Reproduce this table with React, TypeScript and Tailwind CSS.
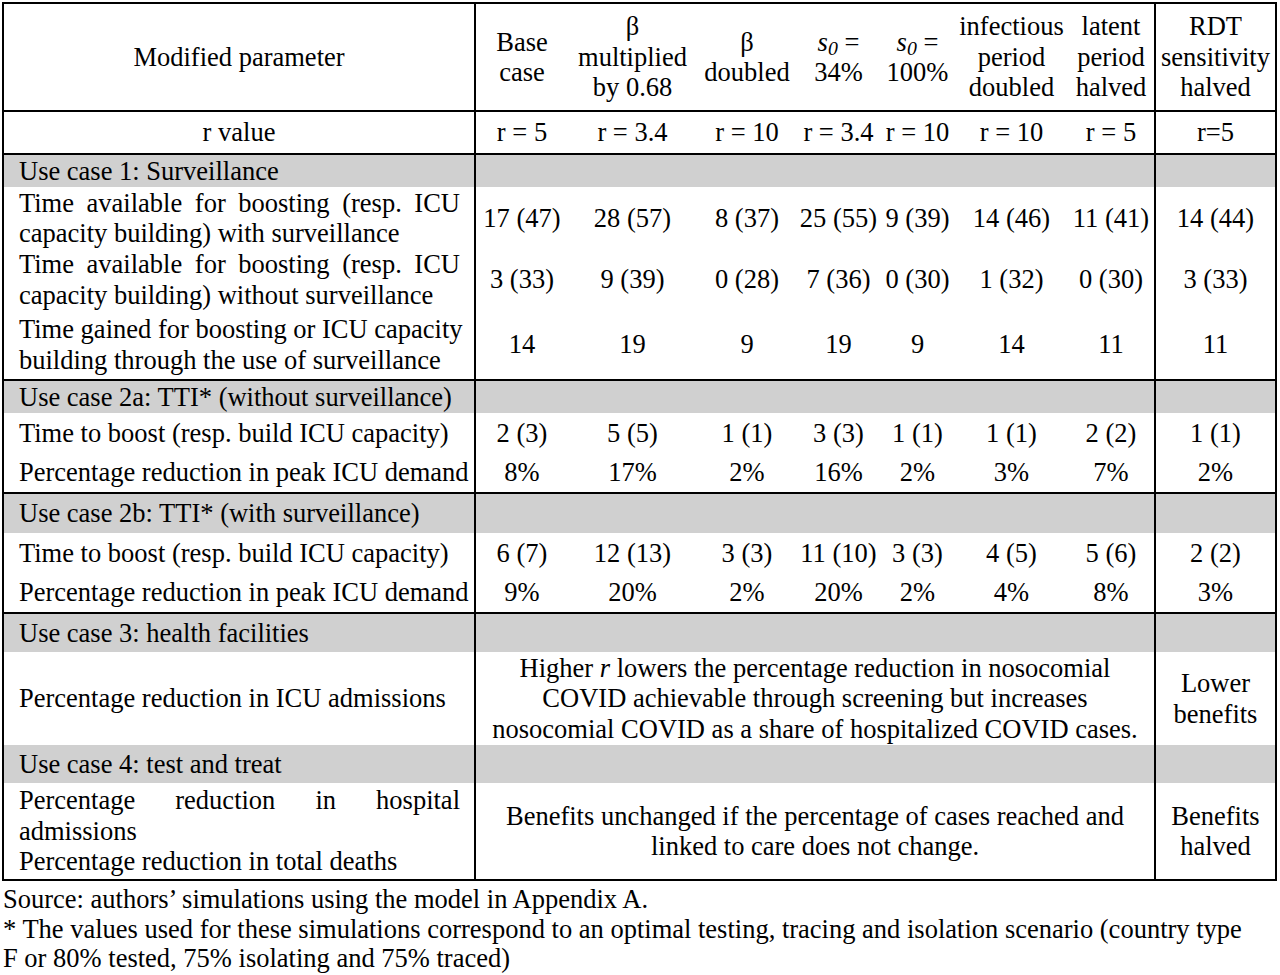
import React from "react";

const midW = ["w-[92px]", "w-[129px]", "w-[100px]", "w-[83px]", "w-[75px]", "w-[113px]", "w-[86px]"];

type RowProps = {
  h: string;
  line?: boolean;
  gray?: boolean;
  left: React.ReactNode;
  leftCenter?: boolean;
  cells?: React.ReactNode[];
  merged?: React.ReactNode;
  rdt?: React.ReactNode;
};

function S0() {
  return (
    <span className="italic">
      s<sub>0</sub>
    </span>
  );
}

function Row({ h, line, gray, left, leftCenter, cells, merged, rdt }: RowProps) {
  return (
    <div
      className={`flex ${h} ${line ? "border-b-2 border-black" : ""} ${gray ? "bg-[#d0d0d0]" : ""}`}
    >
      <div
        className={`w-[472px] shrink-0 border-r-2 border-black flex flex-col justify-center ${
          leftCenter ? "items-center text-center" : "pl-[15px] pr-[14px]"
        }`}
      >
        {left}
      </div>
      {merged !== undefined ? (
        <div className="w-[678px] shrink-0 flex flex-col items-center justify-center text-center">
          {merged}
        </div>
      ) : (
        <div className="w-[678px] shrink-0 flex">
          {midW.map((w, i) => (
            <div key={i} className={`${w} shrink-0 flex flex-col items-center justify-center text-center whitespace-nowrap`}>
              {cells ? cells[i] : null}
            </div>
          ))}
        </div>
      )}
      <div className="w-[121px] shrink-0 border-l-2 border-black flex flex-col items-center justify-center text-center whitespace-nowrap">
        {rdt}
      </div>
    </div>
  );
}

function J({ children }: { children: React.ReactNode }) {
  return <div className="text-justify [text-align-last:justify] whitespace-nowrap">{children}</div>;
}
function L({ children }: { children: React.ReactNode }) {
  return <div className="whitespace-nowrap">{children}</div>;
}

export default function App() {
  return (
    <div className="w-[1280px] h-[975px] bg-white text-black font-['Liberation_Serif','Times_New_Roman',serif] text-[26.5px] leading-[30.5px] overflow-hidden">
      <div className="ml-[2px] mt-[2px] w-[1275px] border-2 border-black">
        <Row
          h="h-[108px]"
          line
          leftCenter
          left={<div>Modified parameter</div>}
          cells={[
            <>
              <div>Base</div>
              <div>case</div>
            </>,
            <>
              <div>β</div>
              <div>multiplied</div>
              <div>by 0.68</div>
            </>,
            <>
              <div>β</div>
              <div>doubled</div>
            </>,
            <>
              <div>
                <S0 /> =
              </div>
              <div>34%</div>
            </>,
            <>
              <div>
                <S0 /> =
              </div>
              <div>100%</div>
            </>,
            <>
              <div>infectious</div>
              <div>period</div>
              <div>doubled</div>
            </>,
            <>
              <div>latent</div>
              <div>period</div>
              <div>halved</div>
            </>,
          ]}
          rdt={
            <>
              <div>RDT</div>
              <div>sensitivity</div>
              <div>halved</div>
            </>
          }
        />
        <Row
          h="h-[43px]"
          line
          leftCenter
          left={<div>r value</div>}
          cells={["r = 5", "r = 3.4", "r = 10", "r = 3.4", "r = 10", "r = 10", "r = 5"]}
          rdt="r=5"
        />
        <Row h="h-[32px]" gray left={<L>Use case 1: Surveillance</L>} />
        <Row
          h="h-[62px]"
          left={
            <>
              <J>Time available for boosting (resp. ICU</J>
              <L>capacity building) with surveillance</L>
            </>
          }
          cells={["17 (47)", "28 (57)", "8 (37)", "25 (55)", "9 (39)", "14 (46)", "11 (41)"]}
          rdt="14 (44)"
        />
        <Row
          h="h-[61px]"
          left={
            <>
              <J>Time available for boosting (resp. ICU</J>
              <L>capacity building) without surveillance</L>
            </>
          }
          cells={["3 (33)", "9 (39)", "0 (28)", "7 (36)", "0 (30)", "1 (32)", "0 (30)"]}
          rdt="3 (33)"
        />
        <Row
          h="h-[71px]"
          line
          left={
            <>
              <J>Time gained for boosting or ICU capacity</J>
              <L>building through the use of surveillance</L>
            </>
          }
          cells={["14", "19", "9", "19", "9", "14", "11"]}
          rdt="11"
        />
        <Row h="h-[32px]" gray left={<L>Use case 2a: TTI* (without surveillance)</L>} />
        <Row
          h="h-[40px]"
          left={<L>Time to boost (resp. build ICU capacity)</L>}
          cells={["2 (3)", "5 (5)", "1 (1)", "3 (3)", "1 (1)", "1 (1)", "2 (2)"]}
          rdt="1 (1)"
        />
        <Row
          h="h-[41px]"
          line
          left={<L>Percentage reduction in peak ICU demand</L>}
          cells={["8%", "17%", "2%", "16%", "2%", "3%", "7%"]}
          rdt="2%"
        />
        <Row h="h-[39px]" gray left={<L>Use case 2b: TTI* (with surveillance)</L>} />
        <Row
          h="h-[40px]"
          left={<L>Time to boost (resp. build ICU capacity)</L>}
          cells={["6 (7)", "12 (13)", "3 (3)", "11 (10)", "3 (3)", "4 (5)", "5 (6)"]}
          rdt="2 (2)"
        />
        <Row
          h="h-[41px]"
          line
          left={<L>Percentage reduction in peak ICU demand</L>}
          cells={["9%", "20%", "2%", "20%", "2%", "4%", "8%"]}
          rdt="3%"
        />
        <Row h="h-[38px]" gray left={<L>Use case 3: health facilities</L>} />
        <Row
          h="h-[93px]"
          left={<L>Percentage reduction in ICU admissions</L>}
          merged={
            <>
              <L>
                Higher <span className="italic">r</span> lowers the percentage reduction in nosocomial
              </L>
              <L>COVID achievable through screening but increases</L>
              <L>nosocomial COVID as a share of hospitalized COVID cases.</L>
            </>
          }
          rdt={
            <>
              <div>Lower</div>
              <div>benefits</div>
            </>
          }
        />
        <Row h="h-[38px]" gray left={<L>Use case 4: test and treat</L>} />
        <Row
          h="h-[96px]"
          left={
            <>
              <J>Percentage reduction in hospital</J>
              <L>admissions</L>
              <L>Percentage reduction in total deaths</L>
            </>
          }
          merged={
            <>
              <L>Benefits unchanged if the percentage of cases reached and</L>
              <L>linked to care does not change.</L>
            </>
          }
          rdt={
            <>
              <div>Benefits</div>
              <div>halved</div>
            </>
          }
        />
      </div>
      <div className="mt-[4px] pl-[3px] leading-[29.5px]">
        <div className="whitespace-nowrap">Source: authors’ simulations using the model in Appendix A.</div>
        <div className="whitespace-nowrap">
          * The values used for these simulations correspond to an optimal testing, tracing and isolation scenario (country type
        </div>
        <div className="whitespace-nowrap">F or 80% tested, 75% isolating and 75% traced)</div>
      </div>
    </div>
  );
}
